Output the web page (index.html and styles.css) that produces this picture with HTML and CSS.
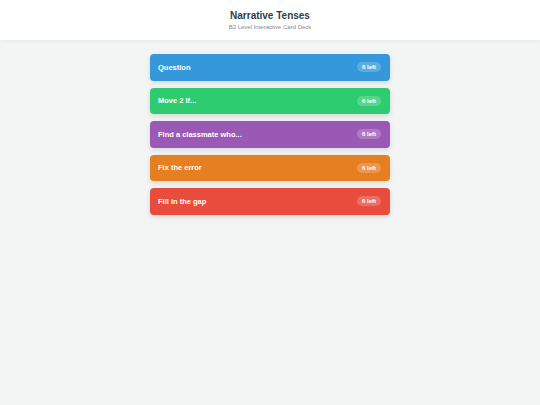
FILE: index.html
```html
<!DOCTYPE html>
<html lang="en">
<head>
  <meta charset="UTF-8">
  <meta name="viewport" content="width=device-width, initial-scale=1.0">
  <title>Narrative Tenses</title>
  <link rel="stylesheet" href="styles.css">
</head>
<body>
  <div class="header">
    <h1>Narrative Tenses</h1>
    <p>B2 Level Interactive Card Deck</p>
  </div>

  <div class="deck">
    <div class="category blue">
      <span class="name">Question</span>
      <span class="count">6 left</span>
    </div>
    <div class="category green">
      <span class="name">Move 2 If...</span>
      <span class="count">6 left</span>
    </div>
    <div class="category purple">
      <span class="name">Find a classmate who...</span>
      <span class="count">6 left</span>
    </div>
    <div class="category orange">
      <span class="name">Fix the error</span>
      <span class="count">6 left</span>
    </div>
    <div class="category red">
      <span class="name">Fill in the gap</span>
      <span class="count">6 left</span>
    </div>
  </div>
</body>
</html>
```

FILE: styles.css
```css
body {
  margin: 0;
  font-family: 'Liberation Sans', Arial, sans-serif;
  background-color: #f3f4f4;
  min-height: 405px;
}

.header {
  background-color: white;
  height: 40px;
  box-sizing: border-box;
  padding-top: 9px;
  text-align: center;
  box-shadow: 0 1px 4px rgba(0, 0, 0, 0.06);
}

.header h1 {
  margin: 0;
  font-size: 10px;
  line-height: 13px;
  color: #2c3e50;
}

.header p {
  margin: 1px 0 0;
  font-size: 6px;
  line-height: 8px;
  color: #7f8c8d;
}

.deck {
  width: 240px;
  margin: 14px auto 0;
  display: flex;
  flex-direction: column;
  gap: 7px;
}

.category {
  height: 26.5px;
  border-radius: 4px;
  padding: 0 9px 0 8px;
  display: flex;
  align-items: center;
  justify-content: space-between;
  color: white;
  box-shadow: 0 2px 5px rgba(0, 0, 0, 0.12);
  cursor: pointer;
}

.category .name {
  font-size: 7.5px;
  font-weight: bold;
}

.category .count {
  font-size: 6px;
  font-weight: bold;
  background-color: rgba(255, 255, 255, 0.2);
  border-radius: 6px;
  padding: 2px 5px;
}

.blue { background-color: #3498db; }
.green { background-color: #2ecc71; }
.purple { background-color: #9b59b6; }
.orange { background-color: #e67e22; }
.red { background-color: #e74c3c; }
```
